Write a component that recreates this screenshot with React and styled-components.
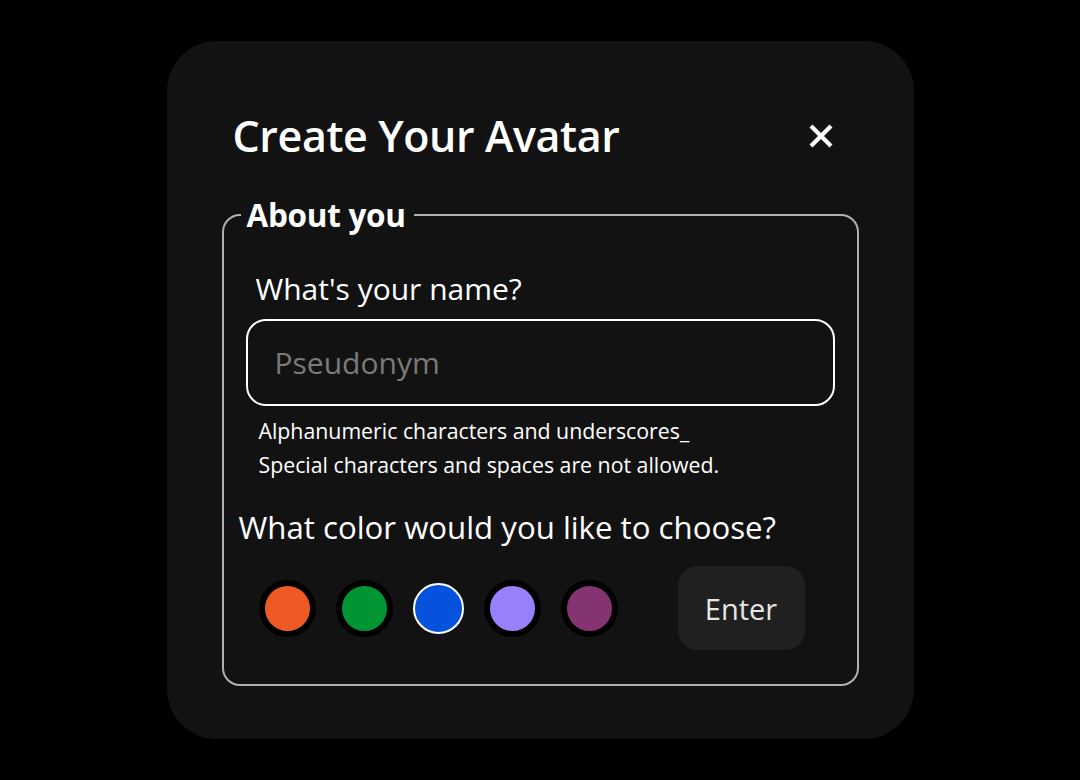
import React, { useState } from 'react';
import styled, { createGlobalStyle } from 'styled-components';

const GlobalStyle = createGlobalStyle`
  html, body {
    margin: 0;
    padding: 0;
    background-color: #000000;
  }
  * {
    box-sizing: border-box;
  }
`;

const Page = styled.div`
  min-height: 100vh;
  display: flex;
  align-items: center;
  justify-content: center;
  font-family: 'Open Sans', 'Noto Sans', sans-serif;
  color: #ffffff;
`;

const Card = styled.div`
  width: 747px;
  height: 698px;
  background-color: #121212;
  border-radius: 50px;
  padding: 71px 55px 0;
`;

const Header = styled.div`
  display: flex;
  align-items: center;
  justify-content: space-between;
  padding: 0 24px 0 11px;
`;

const Title = styled.h1`
  margin: 0;
  font-size: 43px;
  line-height: 48px;
  font-weight: 600;
  letter-spacing: -0.4px;
`;

const CloseButton = styled.button`
  background: none;
  border: none;
  padding: 0;
  width: 28px;
  height: 28px;
  display: flex;
  align-items: center;
  justify-content: center;
  cursor: pointer;
  color: #ffffff;
`;

const Fieldset = styled.fieldset`
  margin: 37px 0 0;
  padding: 0 15px 34px;
  border: 2px solid #b0b0b0;
  border-radius: 18px;
`;

const Legend = styled.legend`
  padding: 0 8px 0 6px;
  margin-left: 2px;
  font-size: 31.5px;
  line-height: 36px;
  font-weight: 700;
  letter-spacing: -0.3px;
`;

const FieldLabel = styled.label`
  display: block;
  margin: 36px 0 0 17px;
  font-size: 30px;
  line-height: 40px;
`;

const NameInput = styled.input`
  display: block;
  width: calc(100% - 14px);
  height: 87px;
  margin: 10px 7px 0;
  padding: 0 27px;
  background: transparent;
  border: 2px solid #ffffff;
  border-radius: 20px;
  color: #ffffff;
  font-family: inherit;
  font-size: 30px;
  outline: none;

  &::placeholder {
    color: #7a7a7a;
  }
`;

const Hint = styled.p`
  margin: 8px 0 0 20px;
  font-size: 21.3px;
  line-height: 34px;
`;

const Question = styled.h2`
  margin: 24px 0 0;
  font-size: 31.2px;
  line-height: 42px;
  font-weight: 400;
`;

const SwatchRow = styled.div`
  display: flex;
  align-items: center;
  gap: 20px;
  margin: 18px 0 0 20px;
`;

const Swatch = styled.button`
  width: ${p => (p.$selected ? 51 : 57)}px;
  height: ${p => (p.$selected ? 51 : 57)}px;
  border-radius: 50%;
  padding: 0;
  background-color: ${p => p.$color};
  border: ${p => (p.$selected ? '2px solid #ffffff' : '6px solid #000000')};
  cursor: pointer;
`;

const EnterButton = styled.button`
  margin-left: 40px;
  width: 127px;
  height: 84px;
  border: none;
  border-radius: 20px;
  background-color: #202020;
  color: #e6e6e6;
  font-family: inherit;
  font-size: 29px;
  cursor: pointer;
`;

const colors = ['#EE5A24', '#009432', '#0652DD', '#9980FA', '#833471'];

const App = () => {
  const [selected, setSelected] = useState(2);

  return (
    <Page>
      <GlobalStyle />
      <Card>
        <Header>
          <Title>Create Your Avatar</Title>
          <CloseButton aria-label="Close">
            <svg width="26" height="26" viewBox="0 0 26 26">
              <path d="M3 3 L23 23 M23 3 L3 23" stroke="#ffffff" strokeWidth="4.2" strokeLinecap="butt" />
            </svg>
          </CloseButton>
        </Header>
        <Fieldset>
          <Legend>About you</Legend>
          <FieldLabel htmlFor="name">What's your name?</FieldLabel>
          <NameInput id="name" placeholder="Pseudonym" />
          <Hint>
            Alphanumeric characters and underscores_
            <br />
            Special characters and spaces are not allowed.
          </Hint>
          <Question>What color would you like to choose?</Question>
          <SwatchRow>
            {colors.map((c, i) => (
              <Swatch
                key={c}
                $color={c}
                $selected={selected === i}
                onClick={() => setSelected(i)}
              />
            ))}
            <EnterButton>Enter</EnterButton>
          </SwatchRow>
        </Fieldset>
      </Card>
    </Page>
  );
};

export default App;
